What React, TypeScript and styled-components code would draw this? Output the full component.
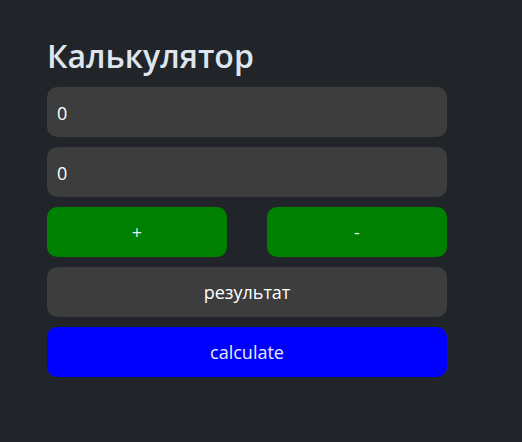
import React, { useState } from 'react';
import styled, { createGlobalStyle } from 'styled-components';

const GlobalStyle = createGlobalStyle`
  html, body {
    margin: 0;
    background: #212429;
    font-family: 'Open Sans', 'Noto Sans', sans-serif;
  }
`;

const Page = styled.div`
  min-height: 442px;
  box-sizing: border-box;
  padding: 36px 47px;
`;

const Calc = styled.div`
  width: 400px;
  display: flex;
  flex-direction: column;
  gap: 10px;
`;

const Title = styled.h1`
  margin: 0 0 1px;
  font-size: 32px;
  font-weight: 600;
  line-height: 40px;
  color: #dfe5ec;
`;

const Field = styled.input`
  box-sizing: border-box;
  height: 50px;
  width: 100%;
  border: none;
  border-radius: 10px;
  background: #3d3d3d;
  color: #ffffff;
  font-family: inherit;
  font-size: 18px;
  padding: 2px 10px 0;
  outline: none;
`;

const Row = styled.div`
  display: flex;
  justify-content: space-between;
`;

const Button = styled.button<{ $bg: string; $width?: string }>`
  box-sizing: border-box;
  height: 50px;
  width: ${(p) => p.$width || '100%'};
  border: none;
  border-radius: 10px;
  background: ${(p) => p.$bg};
  color: #e8ebf1;
  font-family: inherit;
  font-size: 18px;
  cursor: pointer;
`;

const Result = styled.div`
  height: 50px;
  border-radius: 10px;
  background: #3d3d3d;
  color: #ffffff;
  font-size: 18px;
  display: flex;
  align-items: center;
  justify-content: center;
`;

export default function App(): JSX.Element {
  const [a, setA] = useState('0');
  const [b, setB] = useState('0');
  const [op, setOp] = useState('+');
  const [result, setResult] = useState('результат');

  const calculate = () => {
    const x = parseFloat(a) || 0;
    const y = parseFloat(b) || 0;
    setResult(String(op === '+' ? x + y : x - y));
  };

  return (
    <Page>
      <GlobalStyle />
      <Calc>
        <Title>Калькулятор</Title>
        <Field value={a} onChange={(e) => setA(e.target.value)} />
        <Field value={b} onChange={(e) => setB(e.target.value)} />
        <Row>
          <Button $bg="#008000" $width="180px" onClick={() => setOp('+')}>
            +
          </Button>
          <Button $bg="#008000" $width="180px" onClick={() => setOp('-')}>
            -
          </Button>
        </Row>
        <Result>{result}</Result>
        <Button $bg="#0000ff" onClick={calculate}>
          calculate
        </Button>
      </Calc>
    </Page>
  );
}
